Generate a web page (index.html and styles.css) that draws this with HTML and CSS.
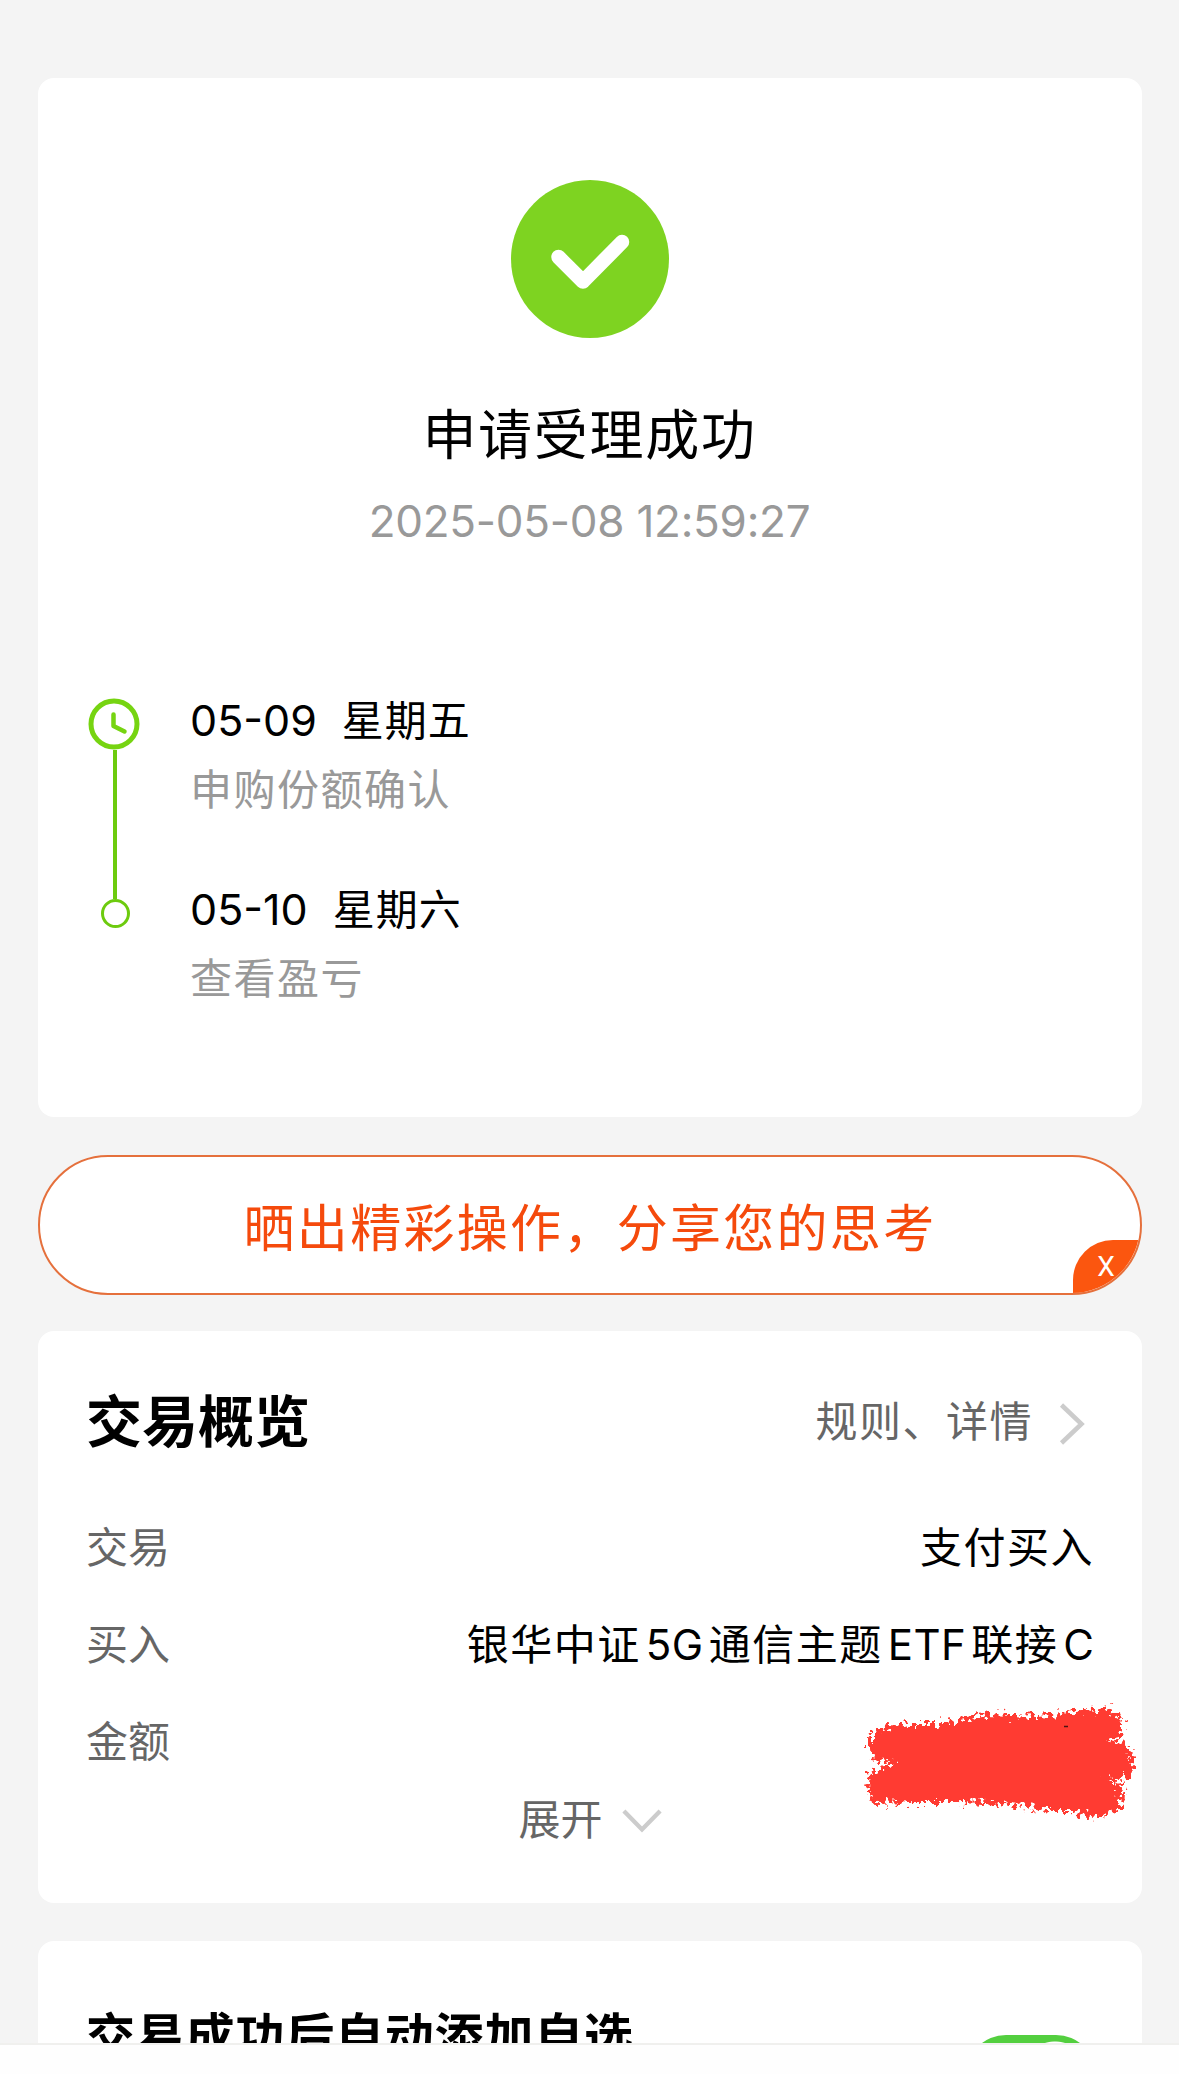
FILE: index.html
```html
<!DOCTYPE html>
<html lang="zh-CN">
<head>
  <meta charset="UTF-8">
  <meta name="viewport" content="width=device-width, initial-scale=1.0">
  <title>申请受理成功</title>
  <link rel="stylesheet" href="styles.css">
</head>
<body>
  <main>
    <section class="card result">
      <svg class="result-icon" viewBox="0 0 158 158">
        <circle cx="79" cy="79" r="79" fill="#7ed321"/>
        <path d="M47.5 77 L72 101.500 L111 62" fill="none" stroke="#fff" stroke-width="14.500" stroke-linecap="round" stroke-linejoin="round"/>
      </svg>
      <h1>申请受理成功</h1>
      <p class="result-time">2025-05-08 12:59:27</p>

      <ul class="timeline">
        <li>
          <div class="rail">
            <svg class="clock" viewBox="0 0 52 52">
              <circle cx="26" cy="26" r="23" fill="none" stroke="#76d411" stroke-width="5"/>
              <path d="M25.500 16.500 V28 L36.500 33.500" fill="none" stroke="#76d411" stroke-width="4.500" stroke-linecap="round" stroke-linejoin="round"/>
            </svg>
            <span class="line"></span>
          </div>
          <div class="step">
            <p class="step-date"><span class="day">05-09</span><span class="week">星期五</span></p>
            <p class="step-desc">申购份额确认</p>
          </div>
        </li>
        <li>
          <div class="rail">
            <span class="line short"></span>
            <span class="dot"></span>
          </div>
          <div class="step">
            <p class="step-date"><span class="day">05-10</span><span class="week">星期六</span></p>
            <p class="step-desc">查看盈亏</p>
          </div>
        </li>
      </ul>
    </section>

    <a class="share" href="#">
      <span class="share-text">晒出精彩操作，分享您的思考</span>
      <span class="share-close">X</span>
    </a>

    <section class="card overview">
      <div class="overview-head">
        <h2>交易概览</h2>
        <a class="more" href="#">规则、详情
          <svg class="arrow-right" viewBox="0 0 26 44"><path d="M2.500 3 L22.500 22 L2.500 41" fill="none" stroke="#ccc" stroke-width="4.500"/></svg>
        </a>
      </div>
      <dl>
        <div class="row"><dt>交易</dt><dd>支付买入</dd></div>
        <div class="row"><dt>买入</dt><dd>银华中证<span class="en">5G</span>通信主题<span class="en">ETF</span>联接<span class="en last">C</span></dd></div>
        <div class="row"><dt>金额</dt><dd></dd></div>
      </dl>
      <a class="expand" href="#">展开
        <svg class="arrow-down" viewBox="0 0 42 26"><path d="M2 3 L21 22.500 L40 3" fill="none" stroke="#ccc" stroke-width="4.500"/></svg>
      </a>
      <svg class="scribble" viewBox="0 0 290 130">
        <defs>
          <filter id="rough" x="-5%" y="-10%" width="110%" height="120%">
            <feTurbulence type="fractalNoise" baseFrequency="0.22" numOctaves="2" seed="4" result="noise"/>
            <feDisplacementMap in="SourceGraphic" in2="noise" scale="22" xChannelSelector="R" yChannelSelector="G"/>
            <feGaussianBlur stdDeviation="0.6"/>
          </filter>
        </defs>
        <path filter="url(#rough)" fill="#ff3b30" d="M12 32 L25 25 L52 22 L78 22 L100 19 L128 12 L155 13 L180 14 L204 12 L222 7 L238 8 L250 6 L262 15 L265 24 L264 33 L250 38 L266 42 L274 51 L276 64 L273 76 L248 78 L266 84 L263 94 L262 107 L248 113 L231 115 L214 109 L190 109 L164 104 L130 101 L100 100 L60 100 L15 101 L10 92 L9 78 L13 72 L38 61 L14 57 L12 45 Z"/>
        <path d="M206 24.500 h4" stroke="#4a1412" stroke-width="1.500"/>
      </svg>
    </section>

    <section class="card auto-add">
      <h3>交易成功后自动添加自选</h3>
      <span class="toggle"></span>
    </section>
  </main>
  <footer></footer>
</body>
</html>
```
FILE: styles.css
```css
* {
  box-sizing: border-box;
  margin: 0;
  padding: 0;
}
body {
  height: 2074px;
  overflow: hidden;
  display: flex;
  flex-direction: column;
  background: #f4f4f4;
  color: #000;
  font-family: Inter, "Noto Sans CJK SC", sans-serif;
  font-size: 42px;
  line-height: 60px;
}
a {
  color: inherit;
  text-decoration: none;
}
ul {
  list-style: none;
}
main {
  height: 2043px;
  padding: 78px 37px 0 38px;
  overflow: hidden;
}
footer {
  flex: 1;
  background: #fefefe;
  border-top: 2px solid #f0f0ee;
}
.card {
  background: #fff;
  border-radius: 16px;
}

/* result */
.result {
  height: 1039px;
  padding: 102px 51px 0 50px;
  display: flex;
  flex-direction: column;
  align-items: center;
}
.result-icon {
  width: 158px;
  height: 158px;
}
h1 {
  margin-top: 68px;
  font-size: 54px;
  font-weight: 400;
  letter-spacing: 1.7px;
}
.result-time {
  margin-top: 25px;
  font-size: 44px;
  color: #999;
  letter-spacing: -0.25px;
}
.timeline {
  width: 100%;
  margin-top: 139px;
}
.timeline li {
  display: flex;
  height: 189px;
}
.rail {
  width: 52px;
  display: flex;
  flex-direction: column;
  align-items: center;
}
.clock {
  width: 52px;
  height: 52px;
  margin-top: 8px;
  flex-shrink: 0;
}
.line {
  width: 4px;
  flex: 1;
  margin-left: 2px;
  background: #6dcb0e;
}
.line.short {
  flex: 0 0 20px;
}
.dot {
  width: 29px;
  height: 29px;
  margin-left: 2px;
  border: 3px solid #6dcb0e;
  border-radius: 50%;
}
.step {
  margin-left: 50px;
}
.step-date {
  display: flex;
  height: 60px;
}
.day {
  font-size: 43px;
}
.week {
  margin-left: 25px;
  padding-top: 1px;
  letter-spacing: 1px;
}
.step-desc {
  margin-top: 10px;
  color: #999;
  letter-spacing: 1.5px;
}

/* share */
.share {
  position: relative;
  display: flex;
  align-items: center;
  justify-content: center;
  height: 140px;
  margin: 38px 0 36px;
  background: #fff;
  border: 2px solid #e5703c;
  border-radius: 70px;
  overflow: hidden;
}
.share-text {
  font-size: 51px;
  color: #f54a0c;
  letter-spacing: 2.3px;
  padding-top: 7px;
}
.share-close {
  position: absolute;
  right: -2px;
  bottom: -2px;
  width: 69px;
  height: 55px;
  padding-right: 3px;
  border-top-left-radius: 40px;
  background: #fb560f;
  color: #fff;
  font-family: Roboto, sans-serif;
  font-size: 28px;
  line-height: 54px;
  text-align: center;
}

/* overview */
.overview {
  position: relative;
  height: 572px;
  padding: 61px 48px 0;
}
.overview-head {
  display: flex;
  align-items: center;
  justify-content: space-between;
}
h2 {
  font-size: 56px;
  font-weight: 700;
}
.more {
  display: flex;
  align-items: center;
  color: #666;
  letter-spacing: 1.5px;
}
.arrow-right {
  width: 26px;
  height: 44px;
  margin: 4px 9px 0 26px;
}
dl {
  margin-top: 66px;
}
.row {
  display: flex;
  justify-content: space-between;
  height: 60px;
  margin-bottom: 37px;
}
dt {
  color: #666;
}
dd {
  letter-spacing: 1.5px;
}
.en {
  margin: 0 5px;
  letter-spacing: 0.5px;
}
.en.last {
  margin-right: 0;
  letter-spacing: 0;
}
.expand {
  display: flex;
  align-items: center;
  justify-content: center;
  margin-top: -19px;
  color: #666;
}
.arrow-down {
  width: 40px;
  height: 25px;
  margin-left: 19px;
}
.scribble {
  position: absolute;
  left: 820px;
  top: 371px;
  width: 290px;
  height: 130px;
}

/* auto add */
.auto-add {
  display: flex;
  justify-content: space-between;
  margin-top: 38px;
  height: 200px;
  padding: 66px 46px 0 48px;
}
h3 {
  font-size: 49px;
  font-weight: 700;
  letter-spacing: 0.8px;
}
.toggle {
  width: 130px;
  height: 80px;
  margin-top: 28px;
  border-radius: 40px;
  background: radial-gradient(circle at 89px 40px, #fff 33px, #53cf3f 34px);
}
```
